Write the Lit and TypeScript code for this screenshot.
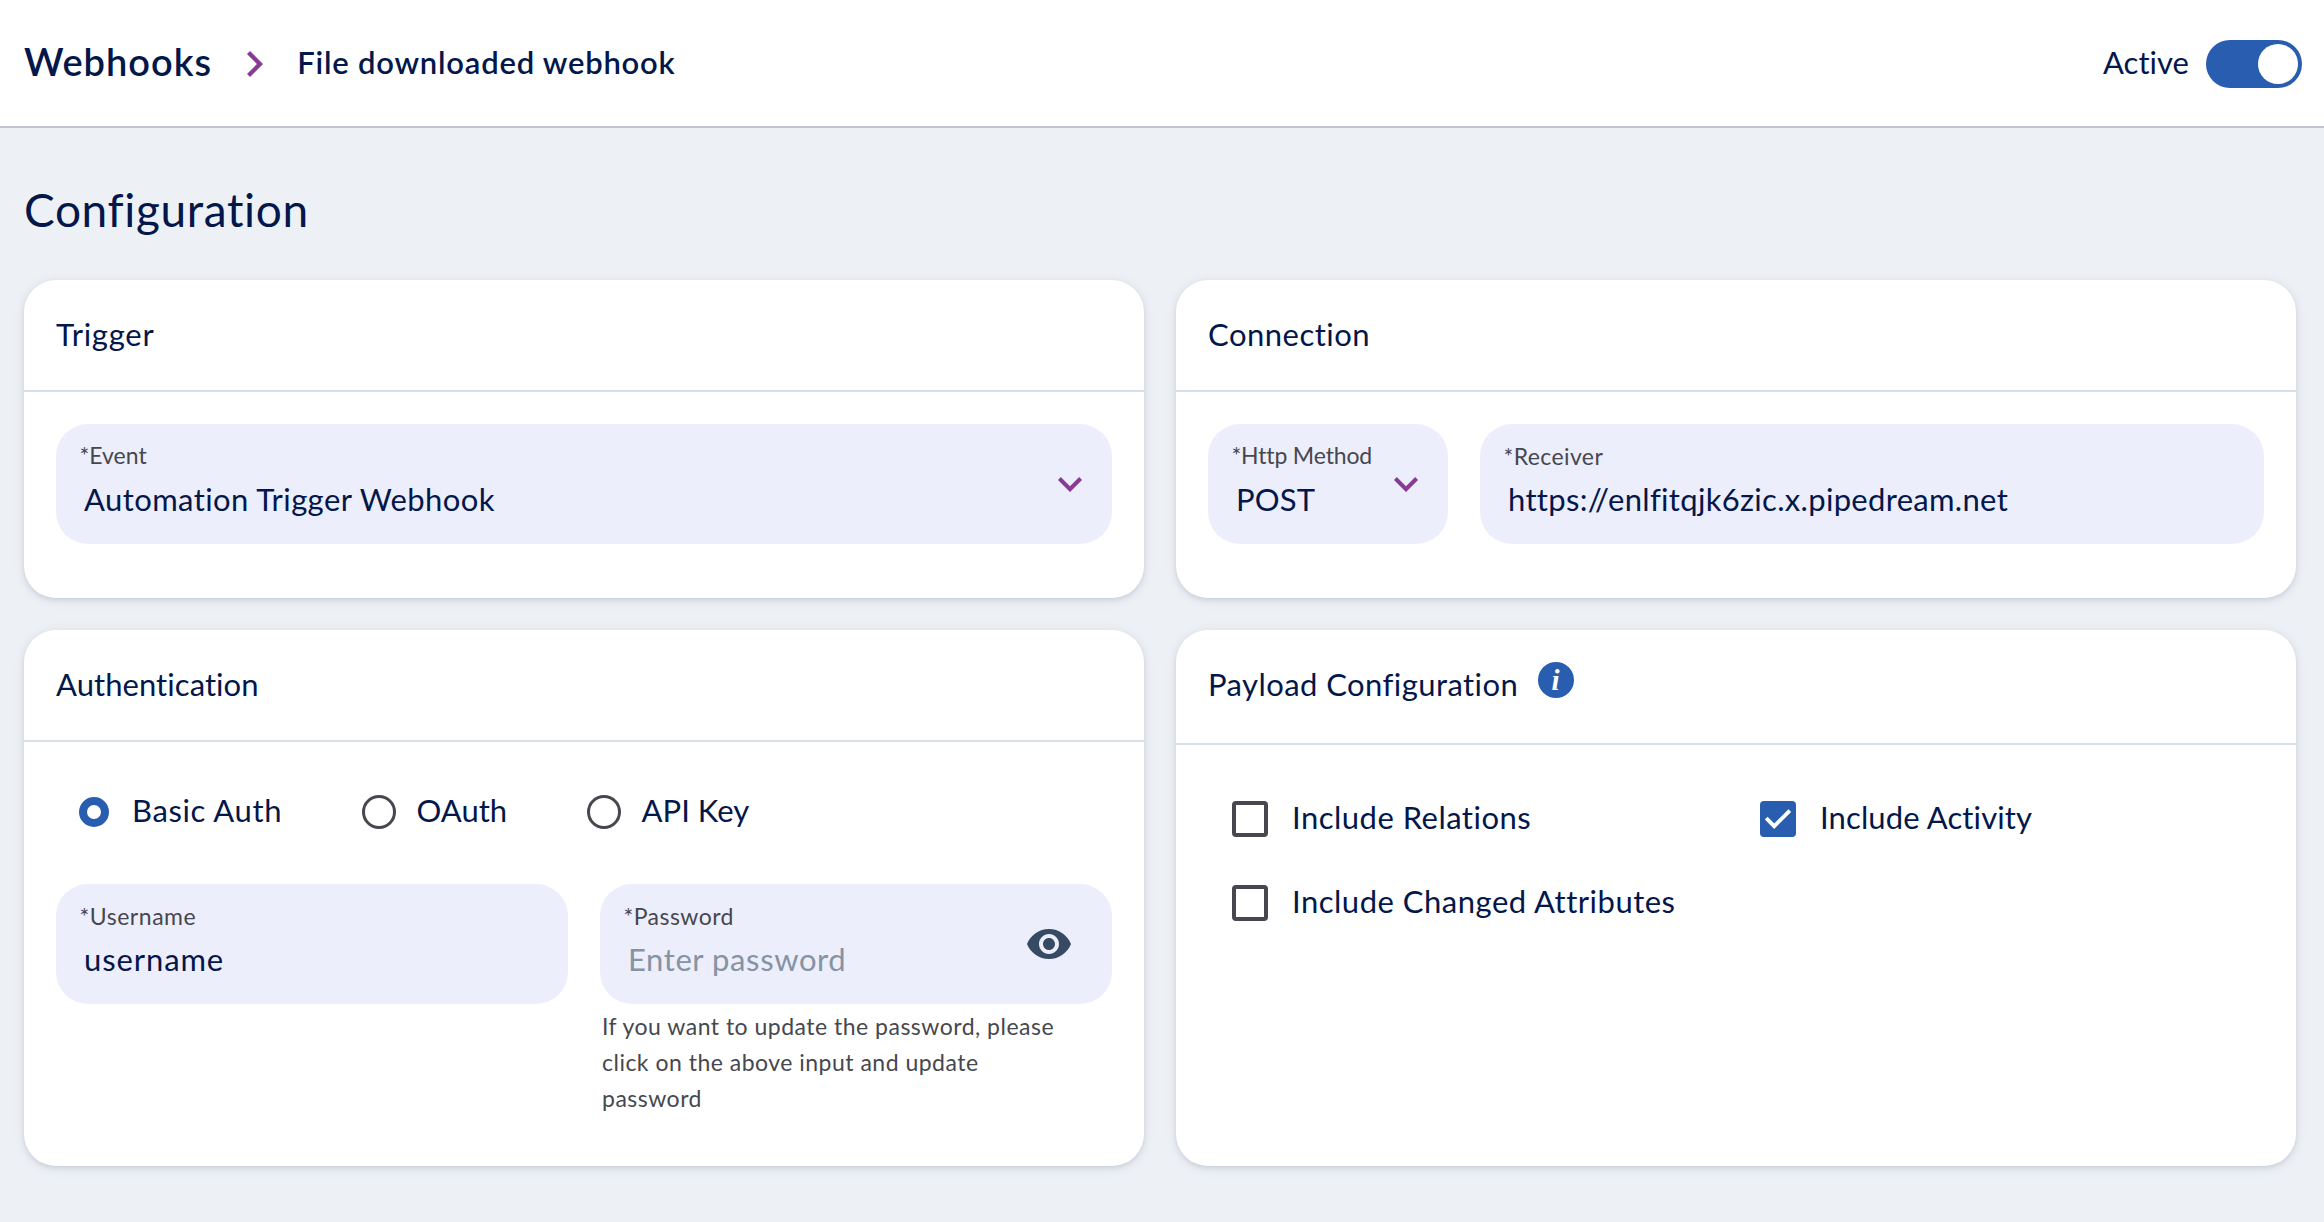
import { LitElement, html, css, svg, nothing } from "lit";
import { customElement, property } from "lit/decorators.js";
import { classMap } from "lit/directives/class-map.js";
import { styleMap } from "lit/directives/style-map.js";

const chevronDown = html`<svg class="chevron" width="24" height="15" viewBox="0 0 12 7.41">
  ${svg`<path fill="#873b94" d="M1.41 0 6 4.58 10.59 0 12 1.41l-6 6-6-6z"></path>`}
</svg>`;

const chevronRight = html`<svg class="crumb-sep" width="16" height="26" viewBox="0 0 7.41 12">
  ${svg`<path fill="#873b94" d="M1.41 0 0 1.41 4.58 6 0 10.59 1.41 12l6-6z"></path>`}
</svg>`;

const eye = html`<svg class="eye" width="44" height="30" viewBox="1 4.5 22 15">
  ${svg`<path fill="#374a63" d="M12 4.5C7 4.5 2.73 7.61 1 12c1.73 4.39 6 7.5 11 7.5s9.27-3.11 11-7.5c-1.73-4.39-6-7.5-11-7.5zM12 17c-2.76 0-5-2.24-5-5s2.24-5 5-5 5 2.24 5 5-2.24 5-5 5zm0-8c-1.66 0-3 1.34-3 3s1.34 3 3 3 3-1.34 3-3-1.34-3-3-3z"></path>`}
</svg>`;

const check = html`<svg class="tick" width="28" height="22" viewBox="0 0 28 22">
  ${svg`<path fill="none" stroke="#fff" stroke-width="3.8" d="M2.2 10.2 10.2 18.2 25.8 2.6"></path>`}
</svg>`;

/** Text with its own tracking, in px. */
const tracked = (text: string, spacing = 0) =>
  html`<span class="t" style=${styleMap({ letterSpacing: `${spacing}px` })}>${text}</span>`;

const shared = css`
  * {
    box-sizing: border-box;
  }
  svg {
    display: block;
    flex: none;
  }
  .t {
    font-variant-ligatures: none;
    white-space: nowrap;
  }
`;

@customElement("form-field")
export class FormField extends LitElement {
  @property() label = "";
  @property() value = "";
  @property() kind: "select" | "input" | "password" = "input";
  @property({ type: Boolean }) placeholder = false;
  @property({ type: Number }) labelSpacing = 0;
  @property({ type: Number }) valueSpacing = 0;

  static styles = [
    shared,
    css`
      :host {
        display: block;
      }
      .field {
        display: flex;
        align-items: center;
        height: 120px;
        border-radius: 32px;
        background: #edeefc;
      }
      .texts {
        flex: 1;
        min-width: 0;
        align-self: flex-start;
        padding-top: 17px;
      }
      .label {
        padding-left: 23.5px;
        font-size: 23px;
        line-height: 28px;
        color: #46474f;
      }
      .input .label {
        padding-top: 1px;
        margin-bottom: -1px;
      }
      .value {
        padding: 10px 0 0 28px;
        line-height: 40px;
      }
      .placeholder {
        color: #8593a3;
      }
      .chevron {
        margin-right: 30px;
      }
      .eye {
        margin-right: 41px;
      }
    `,
  ];

  render() {
    return html`<div class=${classMap({ field: true, input: this.kind !== "select" })}>
      <div class="texts">
        <div class="label">${tracked(this.label, this.labelSpacing)}</div>
        <div class=${classMap({ value: true, placeholder: this.placeholder })}>
          ${tracked(this.value, this.valueSpacing)}
        </div>
      </div>
      ${this.kind === "select" ? chevronDown : this.kind === "password" ? eye : nothing}
    </div>`;
  }
}

interface Option {
  text: string;
  spacing: number;
  on: boolean;
}

@customElement("app-root")
export class AppRoot extends LitElement {
  private auth: Option[] = [
    { text: "Basic Auth", spacing: 0.6, on: true },
    { text: "OAuth", spacing: 0, on: false },
    { text: "API Key", spacing: 0, on: false },
  ];

  private payload: Option[] = [
    { text: "Include Relations", spacing: 0.48, on: false },
    { text: "Include Activity", spacing: 0.12, on: true },
    { text: "Include Changed Attributes", spacing: 0.5, on: false },
  ];

  static styles = [
    shared,
    css`
      :host {
        display: flex;
        flex-direction: column;
        height: 1222px;
        overflow: hidden;
        background: #edf0f5;
        color: #03174a;
        font-family: Lato, "Open Sans", sans-serif;
        font-size: 31px;
        line-height: 40px;
      }
      .topbar {
        display: flex;
        align-items: center;
        height: 128px;
        padding: 0 22px 4px 24px;
        border-bottom: 2px solid #c0c4d0;
        background: #fff;
      }
      .crumb-root {
        font-size: 38px;
        font-weight: 600;
      }
      .crumb-sep {
        margin: 6px 34px 0 35px;
      }
      .crumb {
        flex: 1;
        padding-top: 2px;
        font-weight: 600;
      }
      .state {
        padding-top: 2px;
      }
      .toggle {
        display: flex;
        justify-content: flex-end;
        width: 96px;
        height: 48px;
        margin: 6px 0 0 17px;
        padding: 4px;
        border-radius: 24px;
        background: #285db0;
      }
      .knob {
        width: 40px;
        height: 40px;
        border-radius: 50%;
        background: #fff;
      }
      .page {
        padding: 55px 28px 0 24px;
      }
      h1 {
        margin: 0 0 43px;
        font-size: 46px;
        font-weight: 400;
        line-height: 54px;
      }
      .cards {
        display: grid;
        grid-template-columns: 1fr 1fr;
        grid-template-rows: 318px 536px;
        gap: 32px;
      }
      .card {
        border-radius: 32px;
        background: #fff;
        box-shadow: 0 2px 4px rgba(50, 75, 95, 0.12), 0 2px 12px rgba(50, 75, 95, 0.1);
      }
      .card-head {
        display: flex;
        align-items: center;
        height: 112px;
        padding: 0 32px 2px;
        border-bottom: 2px solid #d6dfe9;
      }
      .card-head.tall {
        height: 115px;
        padding-bottom: 5px;
      }
      .info {
        margin: 0 0 8px 20px;
      }
      .body {
        padding: 32px;
      }
      .pair {
        display: grid;
        grid-template-columns: 240px 1fr;
        gap: 32px;
      }
      .pair.even {
        grid-template-columns: 1fr 1fr;
      }
      .radios {
        display: flex;
        align-items: center;
        gap: 79.5px;
        height: 72px;
        margin-bottom: 38px;
        padding-left: 21px;
      }
      .option {
        display: flex;
        align-items: center;
        gap: 21px;
      }
      .radio {
        width: 34px;
        height: 34px;
        margin-top: 4px;
        border: 3px solid #46474f;
        border-radius: 50%;
      }
      .radio.on {
        width: 30px;
        height: 30px;
        margin: 4px 2px 0;
        border: 8px solid #285db0;
      }
      .help {
        max-width: 468px;
        margin: 4px 0 0;
        padding-left: 2px;
        font-size: 23px;
        line-height: 36px;
        letter-spacing: 0.49px;
        color: #46474f;
      }
      .checks {
        display: grid;
        grid-template-columns: 528px 1fr;
        grid-auto-rows: 84px;
        padding: 30px 0 0 56px;
      }
      .checks .option {
        gap: 24px;
      }
      .box {
        display: flex;
        align-items: center;
        justify-content: center;
        width: 36px;
        height: 36px;
        margin-top: 4px;
        border: 4px solid #46474f;
        border-radius: 4px;
      }
      .box.on {
        border: 0;
        background: #285db0;
      }
      .tick {
        margin-top: -1px;
      }
    `,
  ];

  render() {
    return html`
      <header class="topbar">
        <div class="crumb-root">${tracked("Webhooks", 1)}</div>
        ${chevronRight}
        <div class="crumb">${tracked("File downloaded webhook", 0.78)}</div>
        <div class="state">${tracked("Active", 0.03)}</div>
        <div class="toggle"><div class="knob"></div></div>
      </header>
      <main class="page">
        <h1>${tracked("Configuration", 0.63)}</h1>
        <div class="cards">
          <section class="card">
            <div class="card-head">${tracked("Trigger", 0.75)}</div>
            <div class="body">
              <form-field kind="select" label="*Event" value="Automation Trigger Webhook"
                .labelSpacing=${0} .valueSpacing=${0.42}></form-field>
            </div>
          </section>
          <section class="card">
            <div class="card-head">${tracked("Connection", 0.5)}</div>
            <div class="body pair">
              <form-field kind="select" label="*Http Method" value="POST"
                .labelSpacing=${-0.15} .valueSpacing=${0.15}></form-field>
              <form-field label="*Receiver" value="https://enlfitqjk6zic.x.pipedream.net"
                .labelSpacing=${0.4} .valueSpacing=${0.31}></form-field>
            </div>
          </section>
          <section class="card">
            <div class="card-head">${tracked("Authentication", 0.06)}</div>
            <div class="body">
              <div class="radios">
                ${this.auth.map(
                  (o) => html`<div class="option">
                    <span class=${classMap({ radio: true, on: o.on })}></span>${tracked(o.text, o.spacing)}
                  </div>`
                )}
              </div>
              <div class="pair even">
                <form-field label="*Username" value="username"
                  .labelSpacing=${0.53} .valueSpacing=${0.9}></form-field>
                <div>
                  <form-field kind="password" label="*Password" value="Enter password" placeholder
                    .labelSpacing=${0.45} .valueSpacing=${0.6}></form-field>
                  <p class="help">
                    If you want to update the password, please click on the above input and update password
                  </p>
                </div>
              </div>
            </div>
          </section>
          <section class="card">
            <div class="card-head tall">
              ${tracked("Payload Configuration", 0.43)}
              <svg class="info" width="36" height="36" viewBox="0 0 36 36">
                <circle cx="18" cy="18" r="18" fill="#285db0"></circle>
                <text x="17.6" y="28" fill="#fff" text-anchor="middle" font-family="Liberation Serif, serif"
                  font-size="29" font-style="italic" font-weight="700">i</text>
              </svg>
            </div>
            <div class="checks">
              ${this.payload.map(
                (o) => html`<div class="option">
                  <span class=${classMap({ box: true, on: o.on })}>${o.on ? check : nothing}</span>
                  ${tracked(o.text, o.spacing)}
                </div>`
              )}
            </div>
          </section>
        </div>
      </main>
    `;
  }
}
